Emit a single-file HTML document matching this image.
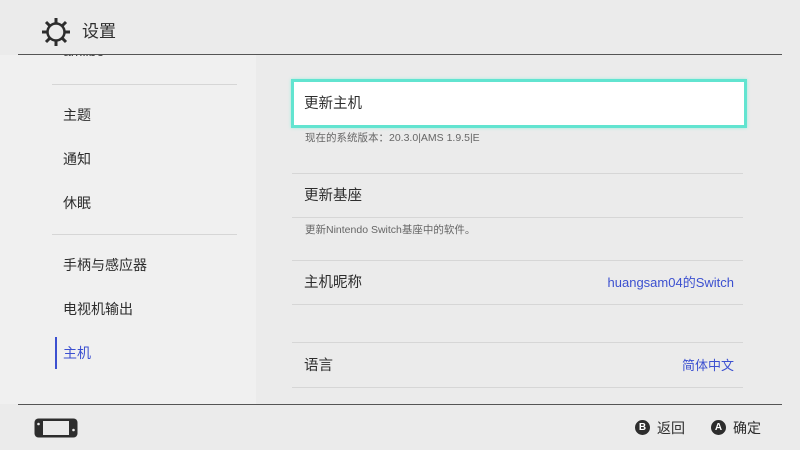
<!DOCTYPE html>
<html><head><meta charset="utf-8"><style>
*{margin:0;padding:0;box-sizing:border-box}
body{width:800px;height:450px;overflow:hidden;background:#ebebeb;font-family:"Liberation Sans","Noto Sans CJK SC",sans-serif;color:#2d2d2d;position:relative}
.a{position:absolute;white-space:nowrap}
.hl{position:absolute;height:1px;background:#d6d6d6}
#left{position:absolute;left:0;top:55px;width:256px;height:349px;background:#f0f0f0;overflow:hidden}
.li{position:absolute;left:63px;font-size:14px;line-height:20px}
.r{position:absolute;font-size:14.5px;line-height:20px}
.v{position:absolute;right:66px;font-size:13px;color:#3c50d0;line-height:20px}
.s{position:absolute;left:305px;font-size:10.5px;color:#666;line-height:14px}
</style></head><body>
<svg class="a" style="left:40px;top:16px" width="32" height="32" viewBox="0 0 32 32">
<g stroke="#2d2d2d" stroke-width="3" stroke-linecap="butt">
<line x1="16" y1="2" x2="16" y2="7"/><line x1="16" y1="25" x2="16" y2="30"/>
<line x1="2" y1="16" x2="7" y2="16"/><line x1="25" y1="16" x2="30" y2="16"/>
<line x1="6" y1="6" x2="9.5" y2="9.5"/><line x1="22.5" y1="22.5" x2="26" y2="26"/>
<line x1="26" y1="6" x2="22.5" y2="9.5"/><line x1="9.5" y1="22.5" x2="6" y2="26"/>
</g><circle cx="16" cy="16" r="8.5" fill="none" stroke="#2d2d2d" stroke-width="2.5"/></svg>
<div class="a" style="left:82px;top:21px;font-size:17px;line-height:22px">设置</div>
<div id="left">
<div class="li" style="top:-14px;color:#444">amiibo</div>
<div class="hl" style="left:52px;width:185px;top:29px"></div>
<div class="li" style="top:50px">主题</div>
<div class="li" style="top:94px">通知</div>
<div class="li" style="top:138px">休眠</div>
<div class="hl" style="left:52px;width:185px;top:179px"></div>
<div class="li" style="top:200px">手柄与感应器</div>
<div class="li" style="top:244px">电视机输出</div>
<div class="a" style="left:55px;top:282px;width:2px;height:32px;background:#3c50d0"></div>
<div class="li" style="top:288px;color:#3c50d0">主机</div>
</div>
<div class="a" style="left:18px;top:54px;width:764px;height:1px;background:#555"></div>
<div class="a" style="left:291px;top:79px;width:456px;height:49px;background:#fff;border:3px solid #62e4d0;box-shadow:0 0 3px #9ef0e0"></div>
<div class="r" style="left:304px;top:94px">更新主机</div>
<div class="s" style="top:131px">现在的系统版本：20.3.0|AMS 1.9.5|E</div>
<div class="hl" style="left:292px;width:451px;top:173px"></div>
<div class="r" style="left:304px;top:186px">更新基座</div>
<div class="hl" style="left:292px;width:451px;top:217px"></div>
<div class="s" style="top:223px">更新Nintendo Switch基座中的软件。</div>
<div class="hl" style="left:292px;width:451px;top:260px"></div>
<div class="r" style="left:304px;top:273px">主机昵称</div>
<div class="v" style="top:273px">huangsam04的Switch</div>
<div class="hl" style="left:292px;width:451px;top:304px"></div>
<div class="hl" style="left:292px;width:451px;top:342px"></div>
<div class="r" style="left:304px;top:356px">语言</div>
<div class="v" style="top:356px">简体中文</div>
<div class="hl" style="left:292px;width:451px;top:387px"></div>
<div class="a" style="left:0;top:405px;width:800px;height:45px;background:#ebebeb"></div>
<div class="a" style="left:18px;top:404px;width:764px;height:1px;background:#555"></div>
<svg class="a" style="left:34px;top:418px" width="44" height="20" viewBox="0 0 44 20">
<rect x="0.5" y="0.5" width="43" height="19" rx="4" fill="#2d2d2d"/>
<rect x="9" y="3" width="26" height="14" fill="#ebebeb"/>
<circle cx="4.5" cy="6" r="1.3" fill="#ebebeb"/><circle cx="39.5" cy="12" r="1.3" fill="#ebebeb"/>
</svg>
<div class="a" style="left:635px;top:420px;width:15px;height:15px;border-radius:50%;background:#2d2d2d;color:#fff;font-size:10px;font-weight:bold;text-align:center;line-height:15px">B</div>
<div class="a" style="left:657px;top:418px;font-size:14px;line-height:20px">返回</div>
<div class="a" style="left:711px;top:420px;width:15px;height:15px;border-radius:50%;background:#2d2d2d;color:#fff;font-size:10px;font-weight:bold;text-align:center;line-height:15px">A</div>
<div class="a" style="left:733px;top:418px;font-size:14px;line-height:20px">确定</div>
</body></html>
